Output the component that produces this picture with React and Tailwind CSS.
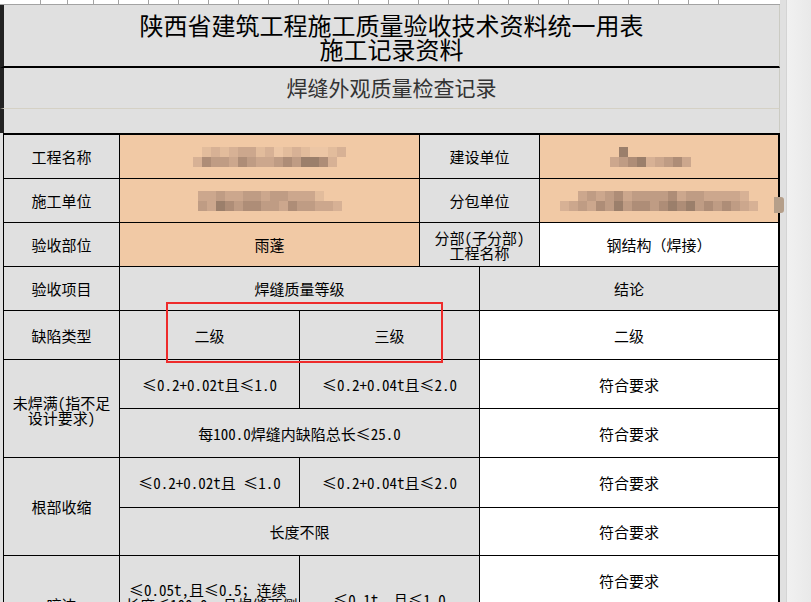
import React from 'react';

// peach blur shades, light -> dark
const shades = ['#ecc6a5', '#e2bc9c', '#d7b195', '#cca78d', '#bf9c84', '#ae8d77', '#9b7f6b', '#87715f'];

// pixelated (blurred) text placeholder
function Mosaic({ rows }) {
  return (
    <div className="flex flex-col">
      {rows.map((row, i) => (
        <div key={i} className="flex">
          {row.split('').map((c, j) => (
            <div key={j} className="w-[9px] h-[10px]" style={{ backgroundColor: c === '.' ? 'transparent' : shades[+c] }} />
          ))}
        </div>
      ))}
    </div>
  );
}

function Cell({ className = '', children }) {
  return (
    <div className={`flex items-center justify-center text-center text-[15px] leading-[15px] text-black overflow-hidden whitespace-nowrap ${className}`}>
      {children}
    </div>
  );
}

const gray = 'bg-[#e0e0e0]';
const peach = 'bg-[#f1c9a5]';
const white = 'bg-white';

export default function App() {
  // top grid line positions of the sheet strip
  const strip = [41, 27, 26, 25, 30, 30, 30, 30, 30, 30, 30, 30, 30, 30, 30, 30, 30, 30, 30, 30, 30, 30, 30, 30];

  return (
    <div className="relative w-[811px] h-[602px] overflow-hidden flex items-start font-['Noto_Sans_Mono_CJK_SC','Noto_Sans_CJK_SC',sans-serif] bg-[#e0e0e0]">
      {/* sheet */}
      <div className="w-[780px] flex flex-col shrink-0">
        <div className="h-[5px] shrink-0 flex bg-white border-b border-[#a3a3a3]">
          {strip.map((w, i) => (
            <div key={i} className="h-full border-r border-[#a3a3a3] shrink-0" style={{ width: w }} />
          ))}
        </div>

        {/* title */}
        <div className="h-[63px] shrink-0 border-l-4 border-l-[#222] border-r border-r-[#cbcbc3] border-b-2 border-b-black flex flex-col items-center justify-center pt-[3px] text-[24px] leading-[24px] text-black">
          <div>陕西省建筑工程施工质量验收技术资料统一用表</div>
          <div>施工记录资料</div>
        </div>
        <div className="h-[41px] shrink-0 border-l-4 border-l-[#222] border-r border-r-[#cbcbc3] border-b border-b-[#d5d1c5] flex items-center justify-center text-[21px] text-[#333]">
          焊缝外观质量检查记录
        </div>
        <div className="h-[24px] shrink-0 border-l-4 border-l-[#222] border-r border-r-[#cbcbc3]" />

        {/* table */}
        <div className="shrink-0 ml-[3px] w-[777px] grid grid-cols-[115px_179px_119px_59px_59px_238px] grid-rows-[43px_43px_43px_43px_48px_48px_48px_49px_47px_48px_48px] gap-px bg-black border-l border-t-2 border-r-2 border-black">
          {/* row 1 */}
          <Cell className={`${gray} col-start-1 row-start-1`}>工程名称</Cell>
          <Cell className={`${peach} col-start-2 col-span-2 row-start-1`}>
            <Mosaic rows={['.1212331201210012', '2544354334546652.']} />
          </Cell>
          <Cell className={`${gray} col-start-4 col-span-2 row-start-1`}>建设单位</Cell>
          <Cell className={`${peach} col-start-6 row-start-1`}>
            <Mosaic rows={['.6.........', '345623453.']} />
          </Cell>

          {/* row 2 */}
          <Cell className={`${gray} col-start-1 row-start-2`}>施工单位</Cell>
          <Cell className={`${peach} col-start-2 col-span-2 row-start-2`}>
            <Mosaic rows={['33433443443331..', '4365455443544332']} />
          </Cell>
          <Cell className={`${gray} col-start-4 col-span-2 row-start-2`}>分包单位</Cell>
          <Cell className={`${peach} col-start-6 row-start-2`}>
            <Mosaic rows={['..3434534444534433332.', '2343546455456564545432']} />
          </Cell>

          {/* row 3 */}
          <Cell className={`${gray} col-start-1 row-start-3`}>验收部位</Cell>
          <Cell className={`${peach} col-start-2 col-span-2 row-start-3`}>雨蓬</Cell>
          <Cell className={`${gray} col-start-4 col-span-2 row-start-3`}>
            分部(子分部)<br />工程名称
          </Cell>
          <Cell className={`${white} col-start-6 row-start-3`}>钢结构（焊接）</Cell>

          {/* row 4 */}
          <Cell className={`${gray} col-start-1 row-start-4`}>验收项目</Cell>
          <Cell className={`${gray} col-start-2 col-span-3 row-start-4`}>焊缝质量等级</Cell>
          <Cell className={`${gray} col-start-5 col-span-2 row-start-4`}>结论</Cell>

          {/* row 5 */}
          <Cell className={`${gray} col-start-1 row-start-5`}>缺陷类型</Cell>
          <Cell className={`${gray} col-start-2 row-start-5`}>二级</Cell>
          <Cell className={`${gray} col-start-3 col-span-2 row-start-5`}>三级</Cell>
          <Cell className={`${white} col-start-5 col-span-2 row-start-5`}>二级</Cell>

          {/* 未焊满 */}
          <Cell className={`${gray} col-start-1 row-start-6 row-span-2 pt-[2px]`}>
            未焊满(指不足<br />设计要求)
          </Cell>
          <Cell className={`${gray} col-start-2 row-start-6`}>≤0.2+0.02t且≤1.0</Cell>
          <Cell className={`${gray} col-start-3 col-span-2 row-start-6`}>≤0.2+0.04t且≤2.0</Cell>
          <Cell className={`${white} col-start-5 col-span-2 row-start-6`}>符合要求</Cell>
          <Cell className={`${gray} col-start-2 col-span-3 row-start-7`}>每100.0焊缝内缺陷总长≤25.0</Cell>
          <Cell className={`${white} col-start-5 col-span-2 row-start-7`}>符合要求</Cell>

          {/* 根部收缩 */}
          <Cell className={`${gray} col-start-1 row-start-8 row-span-2`}>根部收缩</Cell>
          <Cell className={`${gray} col-start-2 row-start-8`}>≤0.2+0.02t且 ≤1.0</Cell>
          <Cell className={`${gray} col-start-3 col-span-2 row-start-8`}>≤0.2+0.04t且≤2.0</Cell>
          <Cell className={`${white} col-start-5 col-span-2 row-start-8`}>符合要求</Cell>
          <Cell className={`${gray} col-start-2 col-span-3 row-start-9`}>长度不限</Cell>
          <Cell className={`${white} col-start-5 col-span-2 row-start-9`}>符合要求</Cell>

          {/* 咬边 */}
          <Cell className={`${gray} col-start-1 row-start-10 row-span-2`}>咬边</Cell>
          <Cell className={`${gray} col-start-2 row-start-10 row-span-2 justify-start pl-[8px]`}>
            <div className="leading-[15px] text-left">
              <div className="pl-[1px]">≤0.05t,且≤0.5；连续</div>
              <div className="-ml-[3px]">长度≤100.0，且焊缝两侧</div>
              <div className="pl-[10px]">咬边总长≤10%焊缝全长</div>
            </div>
          </Cell>
          <Cell className={`${gray} col-start-3 col-span-2 row-start-10 row-span-2 pb-[10px]`}>≤0.1t，且≤1.0</Cell>
          <Cell className={`${white} col-start-5 col-span-2 row-start-10`}>符合要求</Cell>
          <Cell className={`${white} col-start-5 col-span-2 row-start-11`}>符合要求</Cell>
        </div>
      </div>

      {/* right margin */}
      <div className="w-[6px] h-full shrink-0 bg-[#e0e0e0]" />
      <div className="flex-1 h-full border-l border-[#d4d4d4] bg-gradient-to-r from-[#f1f1f1] to-[#e9e9e9]" />

      {/* spill-over blur at the right edge */}
      <div className="absolute left-[774px] top-[197px] w-[10px] h-[16px] bg-[#b59f8a] rounded-r-[3px]" />

      {/* annotation box */}
      <div className="absolute left-[166px] top-[302px] w-[277px] h-[61px] border-2 border-[#ee2b2b]" />
    </div>
  );
}
